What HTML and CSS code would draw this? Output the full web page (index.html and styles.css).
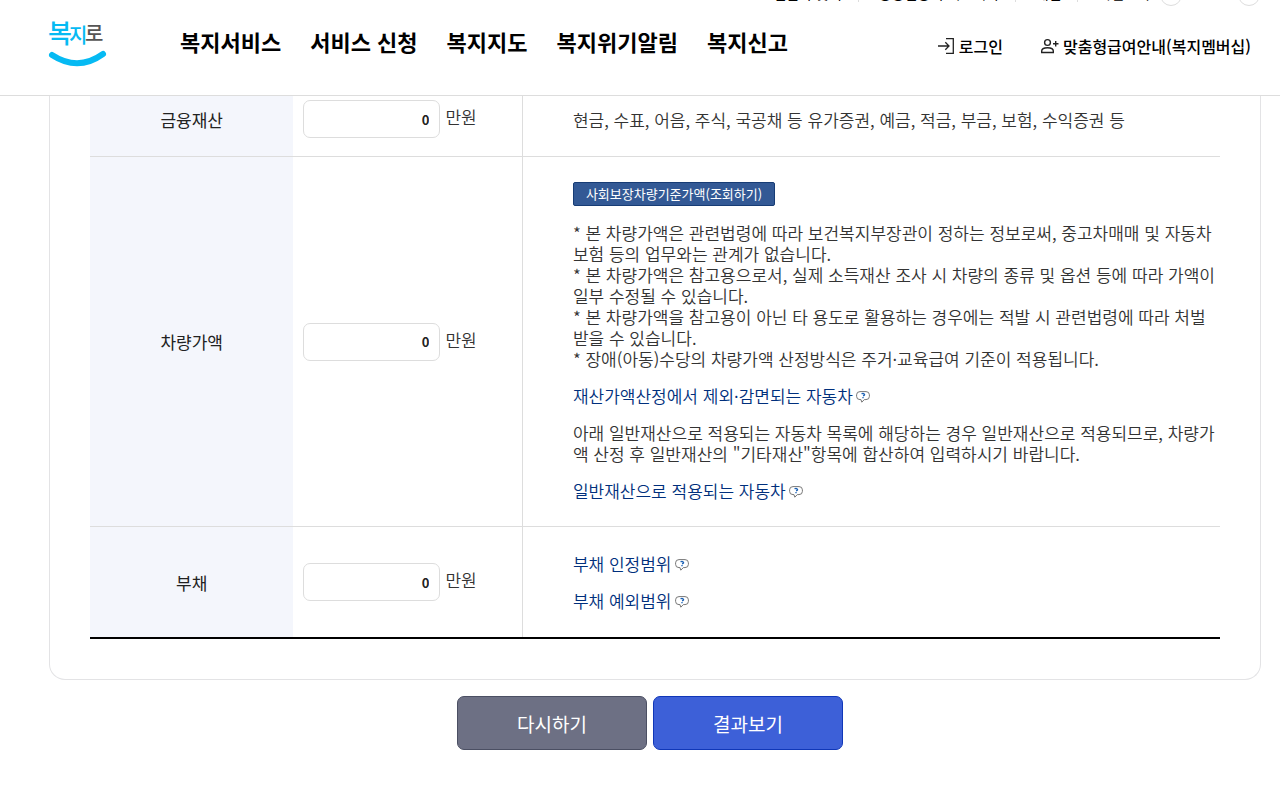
FILE: index.html
```
<!DOCTYPE html>
<html lang="ko">
  <head>
    <meta charset="UTF-8" />
    <meta name="viewport" content="width=device-width, initial-scale=1.0" />
    <title>복지로 모의계산</title>
    <link rel="stylesheet" href="styles.css">
  </head>
  <body>
    <!-- 말풍선 도움말 아이콘 -->
    <svg class="sprite" aria-hidden="true">
      <symbol id="help" viewBox="0 0 14 12">
        <path d="M4 .6h6q3.400 0 3.400 3.200v1.600q0 3.200-3.400 3.200H8.300L5.800 11.200 5 8.600H4Q.6 8.600.6 5.400V3.800Q.6.6 4 .6z" fill="#fff" stroke="#777" />
        <path d="M5.600 2.900q1.400-1 2.600 0t-1.100 2M7 6v1.300" fill="none" stroke="#1d62b5" stroke-width="1.300" />
      </symbol>
    </svg>

    <header class="header">
      <div class="util">
        <a href="#">전문가 찾기</a>
        <a href="#">공동인증서 내보내기</a>
        <a href="#">채널</a>
        <div class="zoom">
          <span>화면크기</span>
          <button class="zoombtn" type="button" aria-label="축소">-</button>
          <button class="zoombtn" type="button" aria-label="확대">+</button>
        </div>
      </div>
      <div class="gnb">
        <a class="logo" href="#" aria-label="복지로">
          <svg width="60" height="54" viewBox="0 0 60 54">
            <g class="logotext">
              <text x="0" y="27" font-size="26">복</text>
              <text x="21" y="27" font-size="20">지</text>
              <text class="gray" x="37" y="25" font-size="20">로</text>
            </g>
            <path d="M4 39q26 17 51-1" fill="none" stroke="#06baf3" stroke-width="6" stroke-linecap="round" />
          </svg>
        </a>
        <nav class="menu">
          <a href="#">복지서비스</a>
          <a href="#">서비스 신청</a>
          <a href="#">복지지도</a>
          <a href="#">복지위기알림</a>
          <a href="#">복지신고</a>
        </nav>
        <div class="member">
          <a href="#">
            <svg width="18" height="18" viewBox="0 0 18 18" fill="none" stroke="#222" stroke-width="1.300">
              <path d="M9 1.700h7.300v14.600H9M1 9h11M8.300 5.200 12 9l-3.700 3.800" />
            </svg>
            로그인
          </a>
          <a href="#">
            <svg width="19" height="18" viewBox="0 0 19 18" fill="none" stroke="#222" stroke-width="1.400">
              <circle cx="7.500" cy="5.500" r="2.900" />
              <path d="M1.700 15.500v-1.500q0-3.300 5.800-3.300t5.800 3.300v1.500zM13 6.800h5.500M15.700 4v5.600" />
            </svg>
            맞춤형급여안내(복지멤버십)
          </a>
        </div>
      </div>
    </header>

    <main class="content">
      <div class="card">
        <table class="calc">
          <tr class="first">
            <th scope="row"><label for="finance">금융재산</label></th>
            <td><input class="money" id="finance" type="text" value="0" />만원</td>
            <td class="desc">
              <p>현금, 수표, 어음, 주식, 국공채 등 유가증권, 예금, 적금, 부금, 보험, 수익증권 등</p>
            </td>
          </tr>
          <tr>
            <th scope="row"><label for="car">차량가액</label></th>
            <td><input class="money" id="car" type="text" value="0" />만원</td>
            <td class="desc">
              <button class="search" type="button">사회보장차량기준가액(조회하기)</button>
              <p>
                * 본 차량가액은 관련법령에 따라 보건복지부장관이 정하는 정보로써, 중고차매매 및 자동차보험 등의 업무와는 관계가 없습니다.<br />
                * 본 차량가액은 참고용으로서, 실제 소득재산 조사 시 차량의 종류 및 옵션 등에 따라 가액이 일부 수정될 수 있습니다.<br />
                * 본 차량가액을 참고용이 아닌 타 용도로 활용하는 경우에는 적발 시 관련법령에 따라 처벌받을 수 있습니다.<br />
                * 장애(아동)수당의 차량가액 산정방식은 주거·교육급여 기준이 적용됩니다.
              </p>
              <p><a href="#">재산가액산정에서 제외·감면되는 자동차<svg class="help"><use href="#help" /></svg></a></p>
              <p>아래 일반재산으로 적용되는 자동차 목록에 해당하는 경우 일반재산으로 적용되므로, 차량가액 산정 후 일반재산의 "기타재산"항목에 합산하여 입력하시기 바랍니다.</p>
              <p><a href="#">일반재산으로 적용되는 자동차<svg class="help"><use href="#help" /></svg></a></p>
            </td>
          </tr>
          <tr class="last">
            <th scope="row"><label for="debt">부채</label></th>
            <td><input class="money" id="debt" type="text" value="0" />만원</td>
            <td class="desc">
              <p><a href="#">부채 인정범위<svg class="help"><use href="#help" /></svg></a></p>
              <p><a href="#">부채 예외범위<svg class="help"><use href="#help" /></svg></a></p>
            </td>
          </tr>
        </table>
      </div>
      <div class="btns">
        <button class="btn reset" type="button">다시하기</button>
        <button class="btn result" type="button">결과보기</button>
      </div>
    </main>
  </body>
</html>
```
FILE: styles.css
```
* {
  box-sizing: border-box;
}

body {
  margin: 0;
  background-color: white;
  color: #333;
  font-family: "Noto Sans CJK KR", sans-serif;
  font-size: 17px;
  font-weight: 350;
  line-height: 21px;
}

a {
  color: black;
  text-decoration: none;
}

button,
input {
  font-family: inherit;
}

.sprite {
  display: none;
}

/* 상단 헤더 */
.header {
  height: 96px;
  overflow: hidden;
  border-bottom: 1px solid #ddd;
}

/* 헤더 위로 올라간 유틸 메뉴 */
.util {
  display: flex;
  justify-content: flex-end;
  align-items: flex-start;
  height: 22px;
  margin-top: -16px;
  padding-right: 20px;
  font-size: 14px;
  font-weight: 400;
  line-height: 18px;
}
.util a {
  padding-right: 16px;
  margin-right: 20px;
  border-right: 1px solid #ddd;
}
.zoom {
  display: flex;
  align-items: flex-start;
  gap: 10px;
}
.zoombtn {
  width: 22px;
  height: 22px;
  padding: 0;
  border: 1px solid #ddd;
  border-radius: 50%;
  background-color: white;
}
.zoombtn + .zoombtn {
  margin-left: 46px;
}

.gnb {
  display: flex;
  align-items: center;
  height: 74px;
  padding: 0 29px 0 48px;
}
.logo svg {
  display: block;
}
.logotext {
  fill: #06baf3;
  font-weight: 500;
}
.logotext .gray {
  fill: #555;
}

.menu {
  display: flex;
  gap: 29px;
  margin-left: 72px;
  padding-bottom: 4px;
  font-size: 22px;
  font-weight: 700;
}

.member {
  display: flex;
  gap: 37px;
  margin-left: auto;
  padding-top: 6px;
  font-size: 16px;
  font-weight: 500;
}
.member a {
  display: flex;
  align-items: center;
  gap: 4px;
}

/* 계산 입력 표 */
.content {
  padding: 0 19px 46px 49px;
}
.card {
  padding: 0 40px 40px;
  border: 1px solid #e3e3e5;
  border-top: 0;
  border-radius: 0 0 16px 16px;
}
.calc {
  width: 100%;
  border-collapse: collapse;
  table-layout: fixed;
  border-bottom: 2px solid black;
}
.calc th,
.calc td {
  border-bottom: 1px solid #ddd;
}
.calc th {
  width: 18%;
  padding: 0;
  background-color: #f4f6fc;
  color: #222;
  font-weight: 400;
}
.calc td {
  width: 229px;
  padding: 0 10px;
}
.calc .desc {
  width: auto;
  padding: 25px 0 25px 50px;
  border-left: 1px solid #ddd;
}
.calc .first th,
.calc .first td {
  padding-top: 4px;
  padding-bottom: 18px;
}
.calc .last th,
.calc .last td {
  border-bottom: 2px solid black;
}
.calc .last .desc {
  padding-top: 26px;
  padding-bottom: 26px;
}
.desc p {
  margin: 16px 0 0;
}
.desc p:first-child {
  margin-top: 0;
}
.desc a {
  color: #002f7c;
}

.money {
  width: 137px;
  height: 38px;
  margin-right: 5px;
  padding: 0 10px;
  border: 1px solid #ddd;
  border-radius: 7px;
  background-color: white;
  color: #222;
  font-size: 13px;
  font-weight: 700;
  text-align: right;
  vertical-align: middle;
}

.search {
  display: block;
  height: 24px;
  padding: 0 12px;
  border: 1px solid #173c75;
  border-radius: 2px;
  background-color: #335995;
  color: white;
  font-size: 13px;
  line-height: 20px;
}

.help {
  width: 14px;
  height: 12px;
  margin-left: 3px;
  vertical-align: 0;
}

/* 하단 버튼 */
.btns {
  display: flex;
  justify-content: center;
  gap: 6px;
  padding: 16px 10px 0 0;
}
.btn {
  width: 190px;
  height: 54px;
  border: 1px solid #4b4f63;
  border-radius: 7px;
  color: white;
  font-size: 19px;
}
.reset {
  background-color: #6d7084;
}
.result {
  border-color: #1037b8;
  background-color: #3d60d8;
}
```
